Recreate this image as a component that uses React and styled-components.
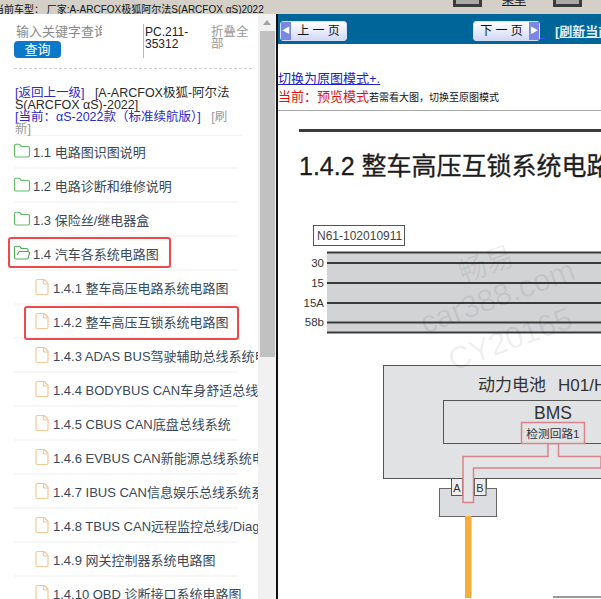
import React from "react";
import styled, { createGlobalStyle } from "styled-components";
import { File, Folder, FolderOpen } from "lucide-react";

const FONT = '"Liberation Sans", "Noto Sans CJK SC", sans-serif';

const sections = [
  { id: "1.1", label: "1.1 电路图识图说明", icon: "folder" },
  { id: "1.2", label: "1.2 电路诊断和维修说明", icon: "folder" },
  { id: "1.3", label: "1.3 保险丝/继电器盒", icon: "folder" },
  { id: "1.4", label: "1.4 汽车各系统电路图", icon: "open", mark: "section" },
  { id: "1.4.1", label: "1.4.1 整车高压电路系统电路图", icon: "file" },
  { id: "1.4.2", label: "1.4.2 整车高压互锁系统电路图", icon: "file", mark: "page" },
  { id: "1.4.3", label: "1.4.3 ADAS BUS驾驶辅助总线系统电路图", icon: "file" },
  { id: "1.4.4", label: "1.4.4 BODYBUS CAN车身舒适总线系统电路图", icon: "file" },
  { id: "1.4.5", label: "1.4.5 CBUS CAN底盘总线系统", icon: "file" },
  { id: "1.4.6", label: "1.4.6 EVBUS CAN新能源总线系统电路图", icon: "file" },
  { id: "1.4.7", label: "1.4.7 IBUS CAN信息娱乐总线系统系统", icon: "file" },
  { id: "1.4.8", label: "1.4.8 TBUS CAN远程监控总线/Diagnose", icon: "file" },
  { id: "1.4.9", label: "1.4.9 网关控制器系统电路图", icon: "file" },
  { id: "1.4.10", label: "1.4.10 OBD 诊断接口系统电路图", icon: "file" },
];

const App = () => {
  return (
    <Page>
      <GlobalStyle />
      <TopStrip>
        <CarInfo>当前车型： 厂家:A-ARCFOX极狐阿尔法S(ARCFOX αS)2022</CarInfo>
        <ToolIcon $left={453} />
        <MenuLabel>菜单</MenuLabel>
        <ToolIcon $left={553} />
      </TopStrip>
      <Main>
        <Sidebar>
          <SidebarBody>
            <SearchArea>
              <SearchColumn>
                <SearchHint>输入关键字查询</SearchHint>
                <SearchButton>查询</SearchButton>
              </SearchColumn>
              <PartNumber>PC.211-35312</PartNumber>
              <CollapseAll>折叠全部</CollapseAll>
            </SearchArea>
            <Crumbs>
              <BlueText>[返回上一级]</BlueText>
              {"   "}[A-ARCFOX极狐-阿尔法S(ARCFOX αS)-2022]
              <br />
              <BlueText>[当前：αS-2022款（标准续航版）]</BlueText>
              {"   "}
              <GreyText>[刷新]</GreyText>
            </Crumbs>
            <TreeList>
              {sections.map((item) => (
                <TreeRow key={item.id} $child={item.icon === "file"}>
                  <IconSlot>
                    {item.icon === "folder" && <Folder size={18} strokeWidth={1.6} color="#62bd66" />}
                    {item.icon === "open" && <FolderOpen size={18} strokeWidth={1.6} color="#4fae55" />}
                    {item.icon === "file" && <File size={18} strokeWidth={1.6} color="#f3c795" />}
                  </IconSlot>
                  <TreeLabel>{item.label}</TreeLabel>
                  {item.mark && <Highlight $kind={item.mark} />}
                </TreeRow>
              ))}
            </TreeList>
          </SidebarBody>
          <ScrollTrack>
            <ScrollArrow />
            <ScrollThumb />
          </ScrollTrack>
        </Sidebar>
        <Content>
          <NavBar>
            <PageButton>
              <ArrowCap>◀</ArrowCap>
              <PageLabel>上 一 页</PageLabel>
            </PageButton>
            <NextGroup>
              <PageButton>
                <PageLabel>下 一 页</PageLabel>
                <ArrowCap>▶</ArrowCap>
              </PageButton>
              <NavGap />
              <RefreshLink>[刷新当前页面]</RefreshLink>
            </NextGroup>
          </NavBar>
          <ModeArea>
            <ModeLink>切换为原图模式+.</ModeLink>
            <ModeLine>
              <RedText>当前：预览模式</RedText>
              <SmallNote>若需看大图，切换至原图模式</SmallNote>
            </ModeLine>
          </ModeArea>
          <Article>
            <TitleRule />
            <Title>1.4.2 整车高压互锁系统电路图</Title>
            <WiringDiagram />
          </Article>
        </Content>
      </Main>
    </Page>
  );
};

// 坐标以图纸左上角为原点 (页面 x 278, y 196)
const WiringDiagram = () => (
  <DiagramSvg viewBox="278 196 323 403" width="323" height="403">
    <rect x="313.5" y="226.5" width="91" height="20" fill="#fff" stroke="#555" />
    <text x="317" y="241" fontSize="12" fill="#444">N61-102010911</text>

    <rect x="327" y="253" width="274" height="81" fill="#d2d3d5" />
    {[253.5, 264, 284, 304, 323.5, 333.5].map((y) => (
      <line key={y} x1="327" x2="601" y1={y} y2={y} stroke="#3a3a3a" strokeWidth="2" />
    ))}
    {[["30", 268], ["15", 288], ["15A", 308], ["58b", 327]].map(([t, y]) => (
      <text key={t} x="324" y={y} fontSize="11.5" fill="#333" textAnchor="end">{t}</text>
    ))}

    <rect x="383.5" y="366.5" width="240" height="113" fill="#e1e2e4" stroke="#555" />
    <text x="478" y="392" fontSize="17" fill="#333">动力电池</text>
    <text x="558" y="392" fontSize="17" fill="#333">H01/H02</text>
    <rect x="443.5" y="401.5" width="180" height="43" fill="#e1e2e4" stroke="#555" />
    <text x="553" y="420" fontSize="17.5" fill="#333" textAnchor="middle">BMS</text>

    <rect x="451.5" y="479.5" width="35" height="17" fill="#e8e8ea" stroke="#555" />
    <rect x="439.5" y="489.5" width="57" height="28" fill="#dcdde0" stroke="#666" />
    <rect x="451.5" y="479.5" width="11" height="17" fill="#eeeeef" stroke="#555" />
    <rect x="474.5" y="479.5" width="11.5" height="17" fill="#eeeeef" stroke="#555" />
    <text x="457" y="493" fontSize="11" fill="#333" textAnchor="middle">A</text>
    <text x="480" y="493" fontSize="11" fill="#333" textAnchor="middle">B</text>

    <path
      d="M548 444.5V457.5H463V503.5H473.5V469H601V457.5H558.5V444.5Z"
      fill="#e4e5e7"
      stroke="#d9838d"
      strokeWidth="1.5"
    />
    <rect x="521.5" y="423.5" width="63" height="21" fill="#e1e2e4" stroke="#d9838d" strokeWidth="1.5" />
    <text x="553" y="438.5" fontSize="11.7" fill="#333" textAnchor="middle">检测回路1</text>

    <rect x="465" y="517" width="6.5" height="82" fill="#f5ae3c" />
    <rect x="553" y="597" width="48" height="2" fill="#999" />

    <g fill="#000" fillOpacity="0.07">
      <text x="0" y="0" fontSize="28" transform="translate(463 284) rotate(-20)">畅易</text>
      <text x="0" y="0" fontSize="31" transform="translate(425 335) rotate(-20)">car388.com</text>
      <text x="0" y="0" fontSize="31" transform="translate(453 372) rotate(-20)">CY20165</text>
    </g>
  </DiagramSvg>
);

const GlobalStyle = createGlobalStyle`
  html, body {
    margin: 0;
    padding: 0;
    overflow: hidden;
    background: #fff;
  }
`;

const Page = styled.div`
  display: flex;
  flex-direction: column;
  width: 601px;
  height: 599px;
  overflow: hidden;
  font-family: ${FONT};
`;

const TopStrip = styled.div`
  position: relative;
  flex: none;
  height: 14px;
  background: #d4d0c8;
  overflow: hidden;
`;

const CarInfo = styled.div`
  margin-left: -6px;
  font-size: 10px;
  line-height: 20px;
  white-space: nowrap;
  color: #111;
`;

const ToolIcon = styled.div`
  position: absolute;
  left: ${(p) => p.$left}px;
  top: -14px;
  box-sizing: border-box;
  width: 29px;
  height: 21px;
  background: #a9aaa5;
  border: 3px solid #3c3c3a;
`;

const MenuLabel = styled.div`
  position: absolute;
  left: 502px;
  top: -7px;
  font-size: 12px;
  line-height: 14px;
  color: #222;
  text-decoration: underline;
`;

const Main = styled.div`
  flex: 1;
  display: flex;
  min-height: 0;
`;

const Sidebar = styled.div`
  flex: none;
  display: flex;
  width: 276px;
  background: #fff;
`;

const SidebarBody = styled.div`
  flex: none;
  width: 258px;
  overflow: hidden;
`;

const SearchArea = styled.div`
  display: flex;
  height: 54px;
  margin: 0 6px 0 14px;
  border-bottom: 1px dashed #cfcfcf;
`;

const SearchColumn = styled.div`
  flex: none;
  width: 129px;
  padding-top: 10px;
`;

const SearchHint = styled.div`
  width: 86px;
  margin-left: 2px;
  overflow: hidden;
  white-space: nowrap;
  font-size: 13px;
  line-height: 15px;
  color: #8a8a8a;
`;

const SearchButton = styled.div`
  width: 47px;
  height: 17px;
  margin-top: 2px;
  border-radius: 4px;
  background: #0b78c9;
  color: #fff;
  font-size: 13px;
  line-height: 17px;
  text-align: center;
`;

const PartNumber = styled.div`
  flex: none;
  box-sizing: border-box;
  width: 68px;
  height: 34px;
  margin-top: 10px;
  padding: 2px 0 0 1px;
  border-left: 1px solid #bbb;
  font-size: 12px;
  line-height: 12px;
  color: #222;
`;

const CollapseAll = styled.div`
  flex: none;
  width: 38px;
  margin-top: 12px;
  font-size: 12.5px;
  line-height: 12px;
  color: #999;
`;

const Crumbs = styled.div`
  margin: 18px 16px 0 15px;
  border-bottom: 1px solid #f4f4f4;
  font-size: 12.5px;
  line-height: 12px;
  color: #2a2a2a;
  white-space: pre-wrap;
`;

const BlueText = styled.span`
  color: #2a2ac8;
`;

const GreyText = styled.span`
  color: #999;
`;

const TreeList = styled.div`
  display: flex;
  flex-direction: column;
  margin: -1px 0 0 14px;
  width: 224px;
`;

const TreeRow = styled.div`
  position: relative;
  flex: none;
  box-sizing: border-box;
  display: flex;
  align-items: center;
  gap: 2px;
  height: 34px;
  padding-left: ${(p) => (p.$child ? "20px" : "0")};
  border-bottom: 2px solid #f7f7f7;
  white-space: nowrap;
`;

const IconSlot = styled.span`
  flex: none;
  display: flex;
  width: 17px;

  svg {
    flex: none;
    margin-left: -1px;
  }
`;

const TreeLabel = styled.span`
  font-size: 13px;
  color: #39495a;
`;

const Highlight = styled.div`
  position: absolute;
  box-sizing: border-box;
  border: 2px solid #ef4848;
  border-radius: 3px;
  pointer-events: none;
  top: ${(p) => (p.$kind === "section" ? "0" : "1px")};
  left: ${(p) => (p.$kind === "section" ? "-6px" : "10px")};
  width: ${(p) => (p.$kind === "section" ? "163px" : "215px")};
  height: ${(p) => (p.$kind === "section" ? "31px" : "34px")};
`;

const ScrollTrack = styled.div`
  position: relative;
  flex: none;
  width: 18px;
  background: #f1f1f1;
`;

const ScrollArrow = styled.div`
  width: 0;
  height: 0;
  margin: 6px auto 0;
  border-left: 4px solid transparent;
  border-right: 4px solid transparent;
  border-bottom: 5px solid #a3a3a3;
`;

const ScrollThumb = styled.div`
  width: 15px;
  height: 326px;
  margin: 6px 0 0 2px;
  background: #c1c1c1;
`;

const Content = styled.div`
  flex: 1;
  min-width: 0;
  border-left: 2px solid #111;
  background: #fff;
`;

const NavBar = styled.div`
  box-sizing: border-box;
  display: flex;
  align-items: center;
  height: 30px;
  padding: 3px 0 0 2px;
  background: #006699;
  overflow: hidden;
`;

const NextGroup = styled.div`
  display: flex;
  flex: none;
  align-items: center;
  margin-left: 126px;
  white-space: nowrap;
`;

const PageButton = styled.div`
  display: flex;
  flex: none;
  align-items: stretch;
  box-sizing: border-box;
  width: 67px;
  height: 20px;
  border: 1px solid #d8def8;
  border-radius: 3px;
  background: linear-gradient(#ffffff, #d3d9f5);
`;

const ArrowCap = styled.span`
  flex: none;
  width: 10px;
  background: #7a86e2;
  color: #fff;
  font-size: 8px;
  line-height: 18px;
  text-align: center;
`;

const PageLabel = styled.span`
  flex: 1;
  font-size: 12px;
  line-height: 18px;
  text-align: center;
  color: #111;
  white-space: pre;
`;

const NavGap = styled.span`
  flex: none;
  width: 15px;
  align-self: flex-end;
  height: 1px;
  margin-bottom: 2px;
  background: linear-gradient(90deg, #3355ee 35%, transparent 35%);
`;

const RefreshLink = styled.span`
  font-size: 13px;
  font-weight: 700;
  color: #dff0ff;
  text-decoration: underline;
`;

const ModeArea = styled.div`
  box-sizing: border-box;
  height: 67px;
  padding-top: 27px;
  border-bottom: 1px solid #aaa;
`;

const ModeLink = styled.div`
  font-size: 13px;
  line-height: 16px;
  color: #2222cc;
  text-decoration: underline;
`;

const ModeLine = styled.div`
  margin-top: 1px;
  line-height: 16px;
  white-space: nowrap;
`;

const RedText = styled.span`
  font-size: 13px;
  color: #e01010;
`;

const SmallNote = styled.span`
  font-size: 10px;
  color: #111;
`;

const Article = styled.div`
  display: flex;
  flex-direction: column;
  overflow: hidden;
`;

const TitleRule = styled.div`
  flex: none;
  height: 3px;
  margin: 18px 0 0 21px;
  background: #3b3b3b;
`;

const Title = styled.h1`
  flex: none;
  margin: 11px 0 0 21px;
  height: 52px;
  font-size: 25px;
  font-weight: 400;
  line-height: 47px;
  white-space: nowrap;
  color: #1d1d1d;
  -webkit-text-stroke: 0.3px #1d1d1d;
`;

const DiagramSvg = styled.svg`
  flex: none;
  display: block;
  font-family: ${FONT};
`;

export default App;
